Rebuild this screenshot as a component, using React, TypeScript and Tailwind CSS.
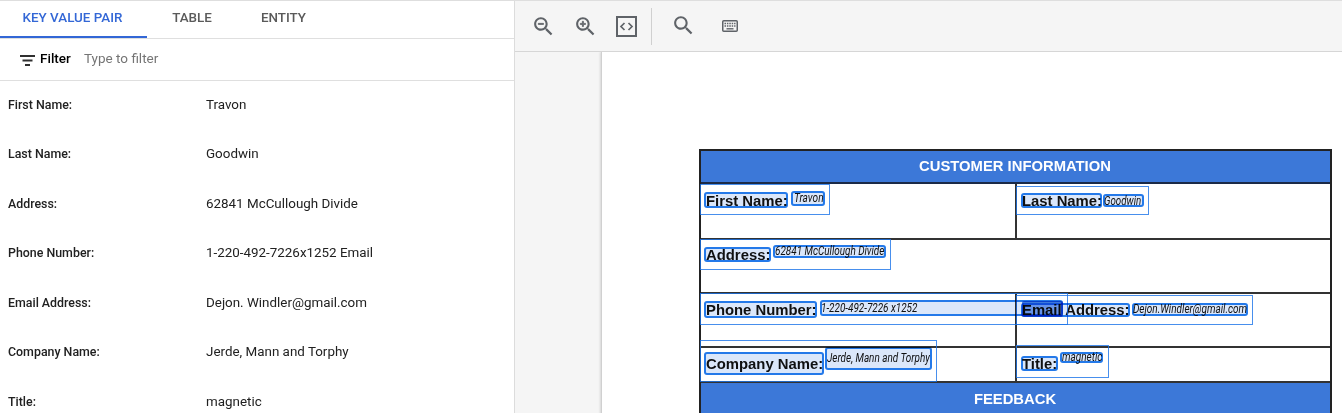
import type { ReactNode } from "react";

const tabs = [
  { label: "KEY VALUE PAIR", box: "w-[147px] pr-[2px] border-b-2 border-[#3367d6] text-[#3367d6]" },
  { label: "TABLE", box: "w-[90px] text-[#5a5a5a]" },
  { label: "ENTITY", box: "w-[93px] text-[#5a5a5a]" },
];

const pairs = [
  ["First Name:", "Travon"],
  ["Last Name:", "Goodwin"],
  ["Address:", "62841 McCullough Divide"],
  ["Phone Number:", "1-220-492-7226x1252 Email"],
  ["Email Address:", "Dejon. Windler@gmail.com"],
  ["Company Name:", "Jerde, Mann and Torphy"],
  ["Title:", "magnetic"],
];

/* Bounding boxes laid over the scanned page, relative to its table. */
const groupBoxes = [
  "left-[1px] top-[35px] w-[130px] h-[31px]",
  "left-[317px] top-[37px] w-[133px] h-[29px]",
  "left-[1px] top-[90px] w-[191px] h-[31px]",
  "left-[1px] top-[144px] w-[368px] h-[32px]",
  "left-[317px] top-[146px] w-[237px] h-[30px]",
  "left-[1px] top-[191px] w-[237px] h-[42px]",
  "left-[317px] top-[196px] w-[93px] h-[33px]",
];

const wordBoxes = [
  "left-[5px] top-[43px] w-[84px] h-[16px]",
  "left-[92px] top-[42px] w-[34px] h-[15px]",
  "left-[322px] top-[44px] w-[81px] h-[15px]",
  "left-[404px] top-[45px] w-[41px] h-[13px]",
  "left-[5px] top-[98px] w-[67px] h-[15px]",
  "left-[74px] top-[96px] w-[113px] h-[13px]",
  "left-[5px] top-[152px] w-[113px] h-[17px]",
  "left-[121px] top-[151px] w-[243px] h-[16px]",
  "left-[322px] top-[154px] w-[109px] h-[14px]",
  "left-[433px] top-[154px] w-[116px] h-[13px]",
  "left-[5px] top-[203px] w-[120px] h-[23px]",
  "left-[126px] top-[198px] w-[107px] h-[23px]",
  "left-[322px] top-[207px] w-[37px] h-[15px]",
  "left-[361px] top-[203px] w-[43px] h-[11px]",
];

function Cell({
  label,
  value,
  box,
  labelBox,
  valueBox,
}: {
  label: string;
  value: string;
  box: string;
  labelBox: string;
  valueBox: string;
}) {
  return (
    <div className={`flex items-start border-b-2 border-[#333] whitespace-nowrap ${box}`}>
      <span className={`shrink-0 font-['Liberation_Sans',sans-serif] text-[14.85px] leading-[18px] font-bold text-[#111] ${labelBox}`}>
        {label}
      </span>
      <span className={`shrink-0 origin-left font-['Roboto',sans-serif] text-[12.2px] leading-[14px] text-[#111] italic ${valueBox}`}>
        {value}
      </span>
    </div>
  );
}

function Icon({ size, children }: { size: string; children: ReactNode }) {
  return (
    <svg viewBox="0 0 24 24" fill="#5f6368" className={`shrink-0 ${size}`}>
      {children}
    </svg>
  );
}

const lens =
  "M15.5 14h-.79l-.28-.27C15.41 12.59 16 11.11 16 9.5 16 5.91 13.09 3 9.5 3S3 5.91 3 9.5 5.91 16 9.5 16c1.61 0 3.09-.59 4.23-1.57l.27.28v.79l5 4.99L20.49 19l-4.99-5zm-6 0C7.01 14 5 11.99 5 9.5S7.01 5 9.5 5 14 7.01 14 9.5 11.99 14 9.5 14z";

function SidePanel() {
  return (
    <aside className="flex w-[515px] shrink-0 flex-col border-r border-[#dcdcdc] bg-white">
      <nav className="flex h-[38px] shrink-0 border-b border-[#dfdfdf]">
        {tabs.map((t) => (
          <div key={t.label} className={`flex h-[37px] justify-center pt-[8px] text-[13.4px] leading-[18px] font-medium ${t.box}`}>
            {t.label}
          </div>
        ))}
      </nav>
      <div className="flex h-[42px] shrink-0 items-center border-b border-[#dfdfdf] pl-[20px]">
        <svg viewBox="0 0 15 11" className="mt-[2px] h-[11px] w-[15px]" fill="#303030">
          <path d="M0 0h15v2H0zM2.5 4.5h10v2h-10zM5 9h5v2H5z" />
        </svg>
        <span className="mb-[4px] ml-[5px] w-[44px] text-[13.5px] leading-5 font-medium text-black">Filter</span>
        <span className="mb-[4px] text-[13.5px] leading-5 text-[#757575]">Type to filter</span>
      </div>
      <dl className="-mt-[1px] flex flex-col">
        {pairs.map(([k, v]) => (
          <div key={k} className="flex h-[49.5px] shrink-0 items-center pl-[8px] text-[#212121]">
            <dt className="w-[198px] text-[12.4px] leading-5 font-medium">{k}</dt>
            <dd className="text-[13.4px] leading-5">{v}</dd>
          </div>
        ))}
      </dl>
    </aside>
  );
}

function Toolbar() {
  return (
    <div className="flex h-[51px] shrink-0 items-center border-b border-[#d6d6d6] bg-[#f5f5f5] pl-[16px]">
      <Icon size="size-[25px]">
        <path d={lens} />
        <path d="M7 9h5v1H7z" stroke="#5f6368" strokeWidth=".8" />
      </Icon>
      <div className="w-[17px]" />
      <Icon size="size-[25px]">
        <path d={lens} />
        <path d="M12 10h-2v2H9v-2H7V9h2V7h1v2h2v1z" stroke="#5f6368" strokeWidth=".8" />
      </Icon>
      <svg viewBox="0 0 21 21" className="ml-[18px] h-[21px] w-[21px] shrink-0" fill="none" stroke="#5f6368">
        <rect x="1" y="1" width="19" height="19" strokeWidth="2" />
        <path d="M8.5 7 5 10.5 8.5 14M12.5 7l3.5 3.5-3.5 3.5" strokeWidth="1.7" />
      </svg>
      <div className="ml-[14px] h-[37px] w-px bg-[#d0d0d0]" />
      <div className="mb-[2px] ml-[19px]">
        <Icon size="size-[25px]">
          <path d={lens} />
        </Icon>
      </div>
      <svg viewBox="0 0 16 12" className="ml-[26px] h-[12px] w-[16px] shrink-0" fill="none" stroke="#5f6368">
        <rect x=".75" y=".75" width="14.5" height="10.5" rx="1" strokeWidth="1.5" />
        <path d="M2.5 3.5h11M2.5 6h11" strokeWidth="1.5" strokeDasharray="1.5 .9" />
        <path d="M4.5 8.8h7" strokeWidth="1.4" />
      </svg>
    </div>
  );
}

function Banner({ pad, children }: { pad: string; children: ReactNode }) {
  return (
    <div className={`col-span-2 flex h-[33px] items-center justify-center border-b-2 border-[#1b2a47] bg-[#3c78d8] font-['Liberation_Sans',sans-serif] text-[14.8px] font-bold text-white ${pad}`}>
      {children}
    </div>
  );
}

function Scan() {
  return (
    <div className="relative h-fit w-[633px] shrink-0">
      <div className="grid grid-cols-[314px_315px] border-2 border-[#222]">
        <Banner pad="pr-[1px]">CUSTOMER INFORMATION</Banner>
        <Cell label="First Name:" value="Travon" box="h-[56px] pl-[5px]" labelBox="mt-[8px] w-[88px]" valueBox="mt-[7px] scale-x-[0.83]" />
        <Cell label="Last Name:" value="Goodwin" box="h-[56px] border-l-2 pl-[5px]" labelBox="mt-[8px] w-[82px]" valueBox="mt-[10px] scale-x-[0.8]" />
        <Cell label="Address:" value="62841 McCullough Divide" box="col-span-2 h-[54px] pl-[5px]" labelBox="mt-[6px] w-[69px]" valueBox="mt-[4px] scale-x-[0.815]" />
        <Cell label="Phone Number:" value="1-220-492-7226 x1252" box="h-[54px] pl-[5px]" labelBox="mt-[7px] w-[115px]" valueBox="mt-[7px] scale-x-[0.815]" />
        <Cell label="Email Address:" value="Dejon.Windler@gmail.com" box="h-[54px] border-l-2 pl-[5px]" labelBox="mt-[7px] w-[111px]" valueBox="mt-[8px] scale-x-[0.82]" />
        <Cell label="Company Name:" value="Jerde, Mann and Torphy" box="h-[35px] pl-[5px]" labelBox="mt-[7px] w-[121px]" valueBox="mt-[3px] scale-x-[0.815]" />
        <Cell label="Title:" value="magnetic" box="h-[35px] border-l-2 pl-[5px]" labelBox="mt-[7px] w-[40px]" valueBox="mt-[2px] scale-x-[0.82]" />
        <Banner pad="pt-[2px] pr-[1px]">FEEDBACK</Banner>
      </div>
      {groupBoxes.map((b) => (
        <div key={b} className={`absolute border border-[#1a73e8]/80 ${b}`} />
      ))}
      {wordBoxes.map((b) => (
        <div key={b} className={`absolute rounded-[3px] border-2 border-[#1a73e8]/95 bg-[#dbe7fa] mix-blend-multiply ${b}`} />
      ))}
      <div className="absolute top-[152px] left-[323px] h-[16px] w-[41px] rounded-[2px] border-2 border-[#1967d2]/60 bg-[#8bb4f2] mix-blend-multiply" />
    </div>
  );
}

export default function App() {
  return (
    <div className="flex h-[413px] w-[1342px] flex-col overflow-hidden border-t border-[#dedede] bg-white font-['Roboto',sans-serif]">
      <div className="flex min-h-0 flex-1">
        <SidePanel />
        <main className="flex min-w-0 flex-1 flex-col bg-[#f5f5f5]">
          <Toolbar />
          <div className="flex min-h-0 flex-1 overflow-hidden pl-[86px]">
            <div className="flex h-[600px] w-[741px] shrink-0 border-l border-[#d0d0d0] bg-white pt-[97px] pl-[97px] shadow-[-1px_0_2px_rgba(0,0,0,0.12)]">
              <Scan />
            </div>
          </div>
        </main>
      </div>
    </div>
  );
}
